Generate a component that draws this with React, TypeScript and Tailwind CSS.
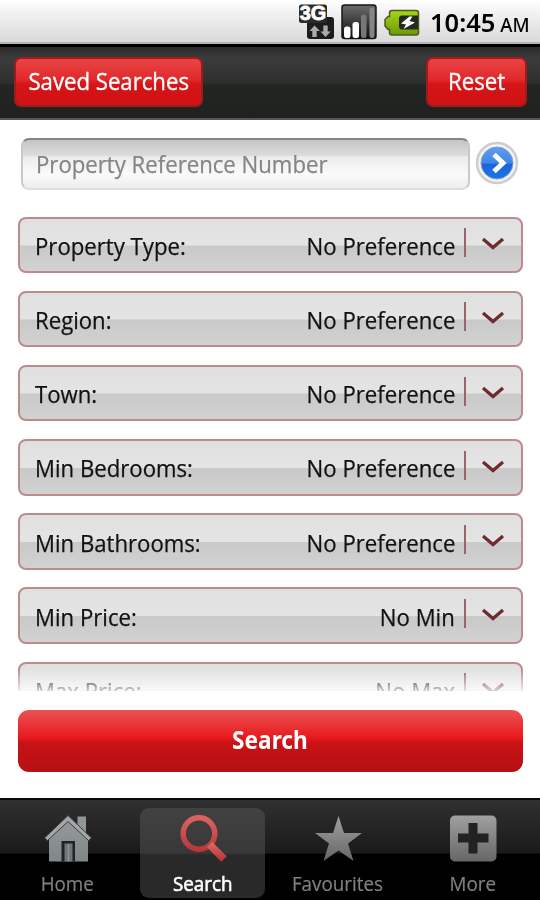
import React from 'react';

const rows = [
  ['Property Type:', 'No Preference'],
  ['Region:', 'No Preference'],
  ['Town:', 'No Preference'],
  ['Min Bedrooms:', 'No Preference'],
  ['Min Bathrooms:', 'No Preference'],
  ['Min Price:', 'No Min'],
  ['Max Price:', 'No Max'],
];

function StatusIcons() {
  return (
    <svg width="124" height="40" viewBox="298 2 124 40" className="block">
      <defs>
        <linearGradient id="dark" x1="0" y1="0" x2="0" y2="1">
          <stop offset="0" stopColor="#6c6c6c" />
          <stop offset="1" stopColor="#0c0c0c" />
        </linearGradient>
        <linearGradient id="green" x1="0" y1="0" x2="0" y2="1">
          <stop offset="0" stopColor="#a4d51c" />
          <stop offset="1" stopColor="#6d9a05" />
        </linearGradient>
      </defs>
      <rect x="307" y="17" width="27" height="22" rx="3" fill="#1c1c1c" />
      <rect x="299" y="4.500" width="28" height="18.500" rx="2.500" fill="#2b2b2b" />
      <text
        x="299.700"
        y="20.400"
        textLength="26.500"
        lengthAdjust="spacingAndGlyphs"
        className="fill-white stroke-white stroke-[0.8px] font-['Liberation_Sans',sans-serif] text-[19.500px] font-bold"
      >
        3G
      </text>
      <path d="M314.500 25.500L320 31H316.700V37H312.300V31H309.500Z" fill="#aaa" />
      <path d="M325.500 37L320.500 31.500H323.300V25.500H327.700V31.500H330.700Z" fill="#aaa" />
      <rect x="342" y="5" width="34" height="33.500" rx="2.500" fill="url(#dark)" stroke="#171717" strokeWidth="1.500" />
      <rect x="344" y="26.500" width="6.500" height="11.500" rx="2.500" fill="#fff" />
      <rect x="352.500" y="22" width="6.500" height="16" rx="2.500" fill="#fff" />
      <rect x="361" y="14.500" width="5.500" height="23.500" rx="2.500" fill="#777" />
      <rect x="369.500" y="7.500" width="5" height="30.500" rx="2.500" fill="#858585" />
      <path d="M392 10.500H416Q418.500 10.500 418.500 13V32.500Q418.500 35 416 35H392Q389.500 35 389.500 32.500V29.500H388L385 26V19.500L388 16.500H389.500V13Q389.500 10.500 392 10.500Z" fill="url(#green)" stroke="#4c5c1c" strokeWidth="1.500" />
      <path d="M402 15.500H418V29.500H402Q399 29.500 399 26.500V18.500Q399 15.500 402 15.500Z" fill="#242a1d" />
      <path d="M409.500 16.500L401 23.500L406 24.500L403.500 29L415 22.500L409.500 21L412.500 16.500Z" fill="#fff" />
    </svg>
  );
}

function GoButton() {
  return (
    <svg width="44" height="44" viewBox="0 0 44 44" className="mb-[2px] ml-[5px] block shrink-0">
      <defs>
        <linearGradient id="blue" x1="0" y1="0" x2="0" y2="1">
          <stop offset="0" stopColor="#5e9df0" />
          <stop offset=".5" stopColor="#3f86e8" />
          <stop offset=".54" stopColor="#1a66d8" />
          <stop offset="1" stopColor="#1b74ea" />
        </linearGradient>
      </defs>
      <circle cx="22" cy="22" r="20" fill="#f3f3f3" stroke="#cdcdcd" strokeWidth="2.500" />
      <circle cx="22" cy="22" r="16" fill="url(#blue)" stroke="#7a9ccd" strokeWidth="1" />
      <path d="M19 13.500L28 22L19 30.500" fill="none" stroke="#fff" strokeWidth="5" />
    </svg>
  );
}

function Row({ label, value }: { label: string; value: string }) {
  return (
    <div className="flex h-[56.500px] shrink-0 items-center rounded-[8px] border-[2px] border-[#bd8a8d] bg-[linear-gradient(#e0e0e0_0%,#e4e4e4_50%,#c9c9c9_52%,#d2d2d2_100%)] pl-[15.500px] text-[24.500px] leading-[32px] text-[#111]">
      <span className="origin-left scale-x-[0.905] pt-[2px] whitespace-nowrap [-webkit-text-stroke:0.25px_#111]">{label}</span>
      <span className="ml-auto origin-right scale-x-[0.905] pt-[2px] whitespace-nowrap [-webkit-text-stroke:0.25px_#111]">{value}</span>
      <span className="mb-[4px] ml-[8.500px] h-[29px] w-[2.500px] bg-[#98666a]" />
      <svg width="24" height="16" viewBox="0 0 24 16" className="mr-[15.500px] mb-[1px] ml-[15px]">
        <path d="M2 3L12 11.500L22 3" fill="none" stroke="#6f2c30" strokeWidth="3.300" />
      </svg>
    </div>
  );
}

function TabIcon({ name }: { name: string }) {
  return (
    <svg width="50" height="50" viewBox="0 0 50 50" className="block">
      <defs>
        <linearGradient id="metal" x1="0" y1="0" x2="0" y2="1">
          <stop offset="0" stopColor="#a0a0a0" />
          <stop offset="1" stopColor="#666" />
        </linearGradient>
        <linearGradient id="house" x1="0" y1="0" x2="0" y2="1">
          <stop offset="0" stopColor="#969898" />
          <stop offset="1" stopColor="#7e8888" />
        </linearGradient>
        <linearGradient id="lens" x1="0" y1="0" x2="0" y2="1">
          <stop offset="0" stopColor="#dc6262" />
          <stop offset="1" stopColor="#bb3838" />
        </linearGradient>
      </defs>
      {name === 'Home' && (
        <g>
          <path d="M6 23L25 7L45 23V48.500H6Z" fill="url(#house)" />
          <path d="M34.500 3.500H43V21L34.500 13Z" fill="#929595" />
          <path d="M1.500 25L25 2.500L48.500 25L45.500 27.500L25 8.500L4.500 27.500Z" fill="#a4a7a7" stroke="#3a3d3d" strokeWidth="1" />
          <path d="M18.500 48.500V28H32V48.500" fill="#1d2424" />
          <path d="M21.500 48.500V30.500H29.500V48.500Z" fill="#6f7676" />
          <path d="M25.500 31V48.500" stroke="#8f9696" strokeWidth="1.500" />
        </g>
      )}
      {name === 'Search' && (
        <g fill="none" stroke="url(#lens)">
          <circle cx="21" cy="20.500" r="15.800" strokeWidth="5.500" />
          <path d="M31.500 31.500L46 46" strokeWidth="7.500" />
        </g>
      )}
      {name === 'Favourites' && (
        <path d="M25.500 3L31 20H49L35 30.500L40.500 48L25.500 37.500L10.500 48L16 30.500L2 20H20Z" fill="url(#metal)" />
      )}
      {name === 'More' && (
        <g>
          <rect x="2" y="2.500" width="46.500" height="46" rx="5" fill="url(#metal)" />
          <path d="M20.500 10H29.500V20.500H40.500V29.500H29.500V40.500H20.500V29.500H10V20.500H20.500Z" fill="#222" />
        </g>
      )}
    </svg>
  );
}

export default function App() {
  return (
    <div className="flex h-[900px] w-[540px] flex-col overflow-hidden bg-white font-['Open_Sans',sans-serif]">
      <header className="flex h-[44px] shrink-0 items-start border-b-[2px] border-[#b5b5b5] bg-[linear-gradient(#fff_0%,#f2f2f2_30%,#d9d9d9_100%)] pr-[10px]">
        <div className="mt-[2px] ml-[298px]">
          <StatusIcons />
        </div>
        <span className="ml-auto flex origin-right scale-x-[0.98] items-baseline pt-[5px] font-['Noto_Sans',sans-serif] whitespace-nowrap text-black">
          <span className="text-[26px] leading-[34px] font-semibold">10:45</span>
          <span className="ml-[5px] text-[19px] font-medium">AM</span>
        </span>
      </header>

      <div className="flex h-[76px] shrink-0 items-start justify-between border-t-[3px] border-b-[2px] border-t-black border-b-[#555] bg-[linear-gradient(#2a2d2c_0%,#3a3b3a_16%,#2e302f_50%,#232522_54%,#20221f_100%)] pr-[13px] pl-[14px] pt-[10px] text-[24.500px] text-white">
        <button className="flex h-[50px] w-[189px] items-center justify-center rounded-[7px] border-[2px] border-[#a31a1c] bg-[linear-gradient(#e94444_0%,#e0292b_45%,#d51517_55%,#cf1214_100%)]">
          <span className="scale-x-[0.905] pb-[1px] whitespace-nowrap [-webkit-text-stroke:0.35px_white]">Saved Searches</span>
        </button>
        <button className="flex h-[50px] w-[101px] items-center justify-center rounded-[7px] border-[2px] border-[#a31a1c] bg-[linear-gradient(#e94444_0%,#e0292b_45%,#d51517_55%,#cf1214_100%)]">
          <span className="scale-x-[0.905] pb-[1px] whitespace-nowrap [-webkit-text-stroke:0.35px_white]">Reset</span>
        </button>
      </div>

      <main className="flex h-[678px] shrink-0 flex-col px-[17.500px]">
        <div className="mt-[18px] flex items-center pl-[3px]">
          <div className="flex h-[52px] w-[449px] items-center rounded-[8px] border-[2px] border-[#c9c9c9] border-t-[#858585] border-b-[#dedede] bg-[linear-gradient(#c4c4c4_0%,#dcdcdc_32%,#ececec_35%,#fafafa_70%,#eee_100%)] pl-[13.500px] text-[24.500px] text-[#858585]">
            <span className="origin-left scale-x-[0.905] pt-[1px] whitespace-nowrap [-webkit-text-stroke:0.25px_#858585]">Property Reference Number</span>
          </div>
          <GoButton />
        </div>
        <div className="mt-[26.500px] flex h-[474.500px] shrink-0 flex-col gap-[17.700px] overflow-hidden [mask-image:linear-gradient(#000_0,#000_452px,transparent_480px)]">
          {rows.map(([label, value]) => (
            <Row key={label} label={label} value={value} />
          ))}
        </div>
        <button className="mt-[18.500px] flex h-[62.500px] shrink-0 items-center justify-center rounded-[11px] bg-[linear-gradient(#ea5355_0%,#e8191d_45%,#c81316_53%,#b71013_100%)] font-['Noto_Sans',sans-serif] text-[24.500px] font-bold text-white">
          <span className="scale-x-[0.925]">Search</span>
        </button>
      </main>

      <nav className="flex h-[102px] shrink-0 border-t-[2px] border-[#0a0a0a] bg-[linear-gradient(#303030_0px,#1a1a1a_53px,#000_54px,#000_100%)] text-[20px]">
        {['Home', 'Search', 'Favourites', 'More'].map((name) => (
          <div key={name} className="flex h-full w-[135px] justify-center">
            <div
              className={
                name === 'Search'
                  ? 'mt-[7.500px] flex h-[90px] w-[125px] flex-col items-center rounded-[9px] bg-[linear-gradient(#414241_0px,#373837_45px,#292929_47px,#292929_100%)] pt-[5.500px] text-white [-webkit-text-stroke:0.6px_white]'
                  : 'mt-[7.500px] flex h-[90px] w-[125px] flex-col items-center pt-[5.500px] text-[#808080] [-webkit-text-stroke:0.2px_#808080]'
              }
            >
              <TabIcon name={name} />
              <span className="mt-[7px] scale-x-[0.94] leading-[27px] whitespace-nowrap">{name}</span>
            </div>
          </div>
        ))}
      </nav>
    </div>
  );
}
